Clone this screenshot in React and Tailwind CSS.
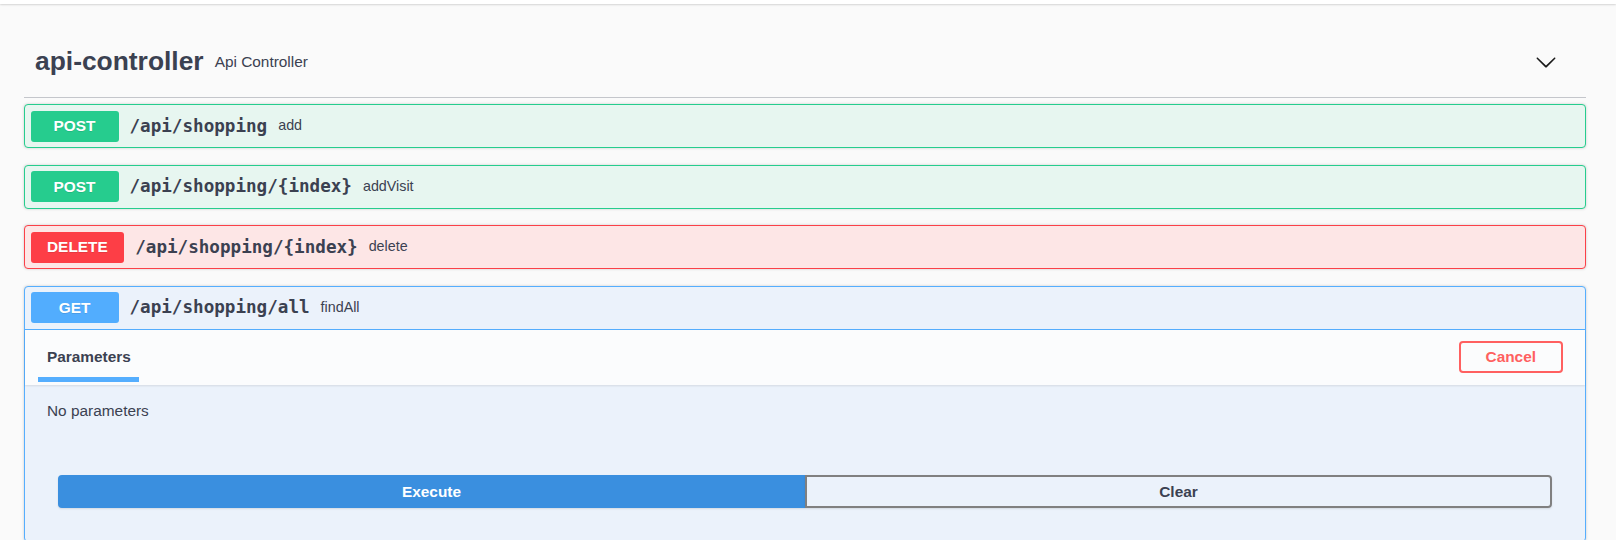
import React from 'react';

const OpSummary = ({ method, badgeClass, path, desc }) => (
  <div className="flex items-center p-[5.5px]">
    <span
      className={`flex h-[31px] min-w-[88px] items-center justify-center rounded-[3px] px-[16.5px] text-[15.4px] font-bold text-white [text-shadow:0_1px_0_rgba(0,0,0,0.1)] ${badgeClass}`}
    >
      {method}
    </span>
    <span className="px-[11px] font-['DejaVu_Sans_Mono',monospace] text-[17.6px] font-bold text-[#3b4151]">
      {path}
    </span>
    <span className="text-[14.3px] text-[#3b4151]">{desc}</span>
  </div>
);

const App = () => {
  return (
    <div className="h-[540px] overflow-hidden bg-[#fafafa] font-['Liberation_Sans',Arial,sans-serif] text-[#3b4151]">
      {/* scheme container edge */}
      <div className="h-[4px] bg-white shadow-[0_1px_2px_0_rgba(0,0,0,0.15)]" />

      <div className="pl-[24px] pr-[30px]">
        {/* Tag header */}
        <div className="mt-[22px] mb-[6px] flex h-[72px] items-center border-b border-[#c4c6cb] pl-[11px]">
          <h3 className="text-[26.4px] font-bold text-[#3b4151]">api-controller</h3>
          <small className="flex-1 px-[11px] text-[15.4px] text-[#3b4151]">Api Controller</small>
          <svg width="22" height="22" viewBox="0 0 20 20" className="mr-[29px]" fill="#1a1a1a">
            <path d="M17.418 6.109c.272-.268.709-.268.979 0s.271.701 0 .969l-7.908 7.83c-.27.268-.707.268-.979 0l-7.908-7.83c-.27-.268-.27-.701 0-.969.271-.268.709-.268.979 0L10 13.25l7.418-7.141z" />
          </svg>
        </div>

        {/* POST /api/shopping */}
        <div className="mb-[16.5px] rounded-[4px] border border-[#26cd8e] bg-[#e7f6f0] shadow-[0_0_3px_rgba(0,0,0,0.19)]">
          <OpSummary method="POST" badgeClass="bg-[#26cc8e]" path="/api/shopping" desc="add" />
        </div>

        {/* POST /api/shopping/{index} */}
        <div className="mb-[16.5px] rounded-[4px] border border-[#26cd8e] bg-[#e7f6f0] shadow-[0_0_3px_rgba(0,0,0,0.19)]">
          <OpSummary method="POST" badgeClass="bg-[#26cc8e]" path="/api/shopping/{index}" desc="addVisit" />
        </div>

        {/* DELETE */}
        <div className="mb-[16.5px] rounded-[4px] border border-[#fb4048] bg-[#fde6e6] shadow-[0_0_3px_rgba(0,0,0,0.19)]">
          <OpSummary method="DELETE" badgeClass="bg-[#fd3e46]" path="/api/shopping/{index}" desc="delete" />
        </div>

        {/* GET open */}
        <div className="rounded-[4px] border border-[#55aefe] bg-[#ebf2fb] shadow-[0_0_3px_rgba(0,0,0,0.19)]">
          <div className="border-b border-[#55aefe]">
            <OpSummary method="GET" badgeClass="bg-[#52adfe]" path="/api/shopping/all" desc="findAll" />
          </div>

          <div className="relative flex h-[55px] items-center justify-between bg-[#fbfcfd] px-[22px] shadow-[0_1px_2px_rgba(0,0,0,0.1)]">
            <h4 className="text-[15.4px] font-bold text-[#3b4151]">Parameters</h4>
            <span className="absolute bottom-[3px] left-[13px] h-[4.5px] w-[101px] bg-[#55aefe]" />
            <button className="h-[32px] rounded-[4px] border-2 border-[#ff6060] bg-transparent px-[25px] text-[15.4px] font-bold text-[#ff6060]">
              Cancel
            </button>
          </div>

          <div className="px-[22px] pt-[14px] text-[15.4px] text-[#3b4151]">No parameters</div>

          <div className="flex px-[33px] pt-[53px] pb-[33px]">
            <button className="h-[33px] flex-1 rounded-l-[4px] border-2 border-[#3a8fdf] bg-[#3a8fdf] text-[15.4px] font-bold text-white shadow-[0_1px_2px_rgba(0,0,0,0.1)]">
              Execute
            </button>
            <button className="h-[33px] flex-1 rounded-r-[4px] border-2 border-[#808080] bg-transparent text-[15.4px] font-bold text-[#3b4151] shadow-[0_1px_2px_rgba(0,0,0,0.1)]">
              Clear
            </button>
          </div>
        </div>
      </div>
    </div>
  );
};

export default App;
